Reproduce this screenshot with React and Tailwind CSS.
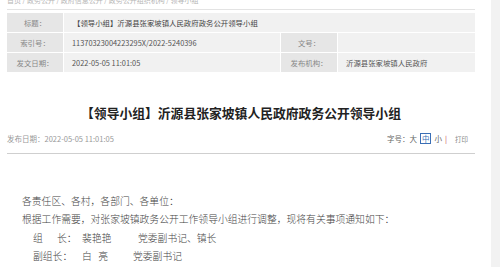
export default function App() {
  const sans = { fontFamily: '"Noto Sans CJK SC", "Liberation Sans", sans-serif' };

  return (
    <div className="w-[500px] h-[267px] overflow-hidden flex bg-white" style={sans}>
      <div className="flex-1 pl-[7px] pr-[16px]">
        {/* 面包屑 */}
        <div className="h-[10px] border-b border-[#e3e3e3] overflow-hidden">
          <div className="-mt-[5px] text-[7px] leading-[10px] text-[#b5b5b5] whitespace-nowrap">
            首页 / 政务公开 / 政府信息公开 / 政务公开组织机构 / 领导小组
          </div>
        </div>

        {/* 信息表 */}
        <div className="mt-[3px] grid grid-cols-[56px_216px_56px_137px] gap-px bg-white text-[7.4px] leading-[19px]">
          <div className="bg-[#e6e6e6] text-center text-[#888]">标题：</div>
          <div className="col-span-3 bg-[#f1f1f1] pl-[9px] text-[#444]">
            【领导小组】沂源县张家坡镇人民政府政务公开领导小组
          </div>
          <div className="bg-[#e6e6e6] text-center text-[#888]">索引号：</div>
          <div className="bg-[#f1f1f1] pl-[8px] text-[#555]">11370323004223295X/2022-5240396</div>
          <div className="bg-[#e6e6e6] text-center text-[#888]">文号：</div>
          <div className="bg-[#f1f1f1]"></div>
          <div className="bg-[#e6e6e6] text-center text-[#888]">发文日期：</div>
          <div className="bg-[#f1f1f1] pl-[8px] text-[#555]">2022-05-05 11:01:05</div>
          <div className="bg-[#e6e6e6] text-center text-[#888]">发布机构：</div>
          <div className="bg-[#f1f1f1] pl-[8px] text-[#555]">沂源县张家坡镇人民政府</div>
        </div>

        {/* 标题 */}
        <h1 className="mt-[32px] text-center text-[12.8px] leading-[18px] font-bold text-[#222] whitespace-nowrap">
          【领导小组】沂源县张家坡镇人民政府政务公开领导小组
        </h1>

        {/* 发布信息 */}
        <div className="mt-[11px] flex items-center justify-between text-[7.5px] leading-[10px] text-[#999]">
          <span>发布日期：2022-05-05 11:01:05</span>
          <div className="flex items-center pr-[7px]">
            <span className="text-[#666]">字号：</span>
            <span className="text-[#666]">大</span>
            <span className="ml-[3px] px-[1px] border border-[#3b6fb6] text-[#3b6fb6] leading-[9px]">中</span>
            <span className="ml-[3px] text-[#666]">小</span>
            <span className="ml-[3px] text-[#c0504d]">|</span>
            <span className="ml-[8px] text-[6.5px] text-[#888]">打印</span>
          </div>
        </div>

        <div className="mt-[9px] border-b border-[#cfcfcf]"></div>

        {/* 正文 */}
        <div
          className="mt-[38px] pl-[15px] text-[9.8px] leading-[18.3px] text-[#444] whitespace-nowrap"
          style={{ fontFamily: '"Noto Sans CJK SC", sans-serif', fontWeight: 300 }}
        >
          <p>各责任区、各村，各部门、各单位：</p>
          <p>根据工作需要，对张家坡镇政务公开工作领导小组进行调整，现将有关事项通知如下：</p>
          <p className="flex">
            <span className="w-[60px] pl-[11px] flex">
              <span className="w-[24px]">组</span>
              <span>长：</span>
            </span>
            <span className="w-[56px]">裴艳艳</span>
            <span>党委副书记、镇长</span>
          </p>
          <p className="flex">
            <span className="w-[60px] pl-[11px]">副组长：</span>
            <span className="w-[51px]">白&nbsp;&nbsp;&nbsp;亮</span>
            <span>党委副书记</span>
          </p>
          <p className="flex">
            <span className="w-[60px]"></span>
            <span className="w-[56px]">王进伟</span>
            <span>镇党委委员、宣传委员</span>
          </p>
        </div>
      </div>
      <div className="w-[12px] bg-[#f2f2f2]"></div>
    </div>
  );
}
